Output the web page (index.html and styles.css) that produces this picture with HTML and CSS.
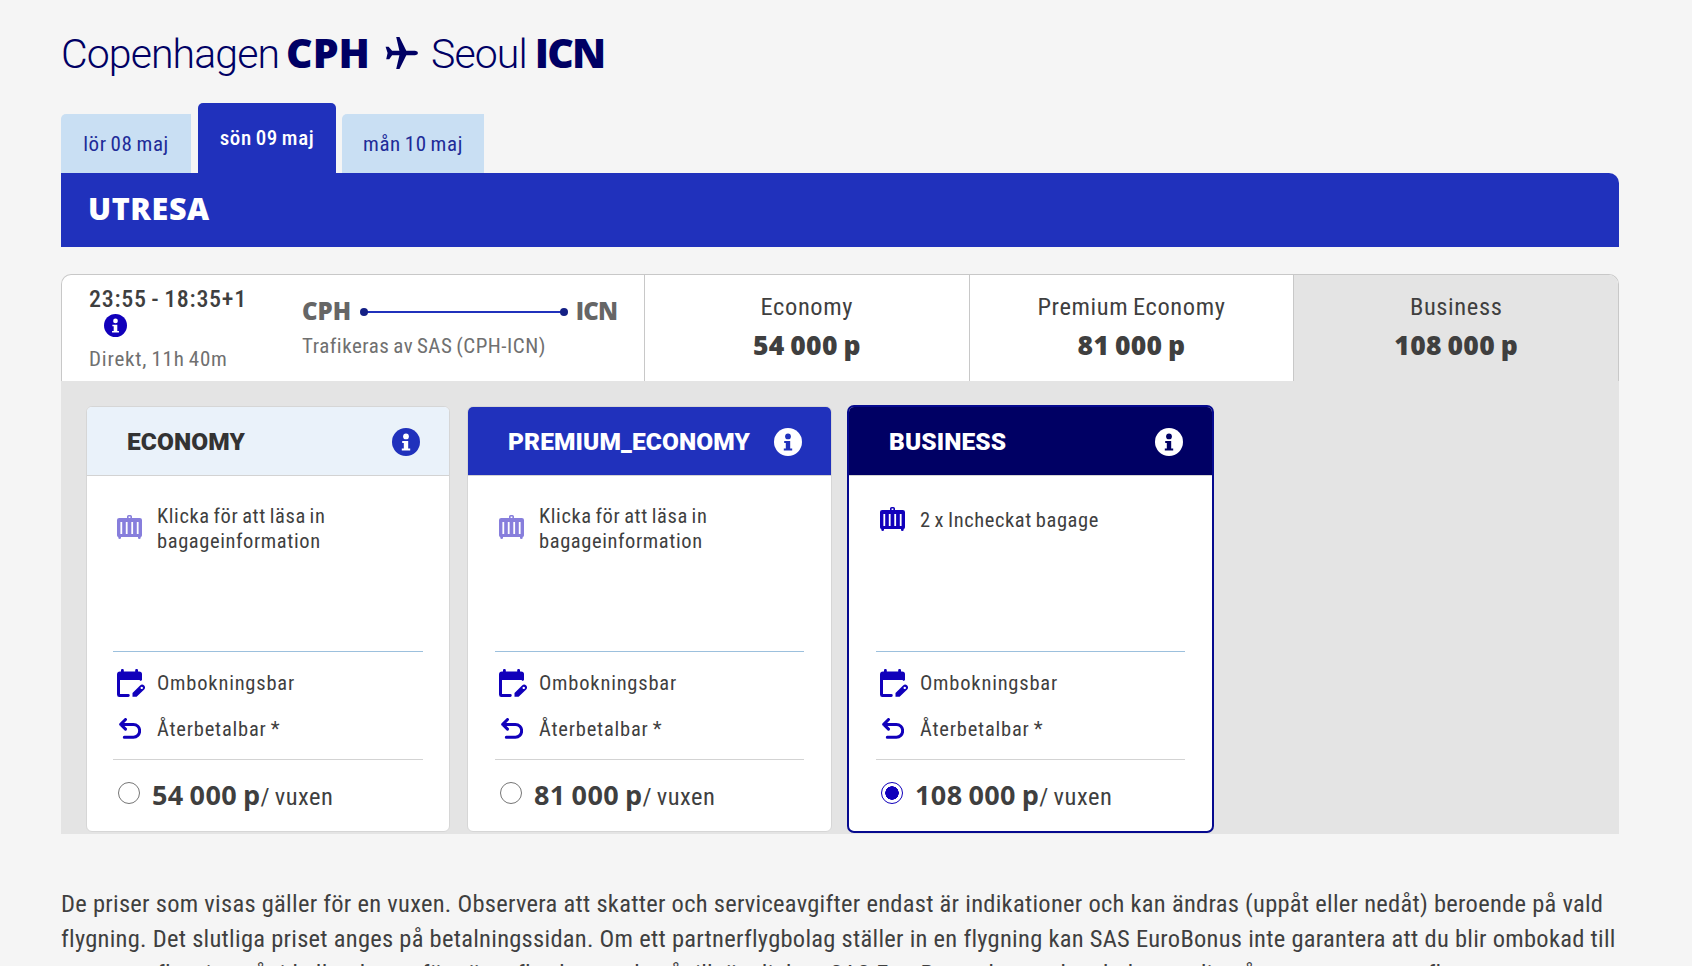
FILE: index.html
```
<!DOCTYPE html>
<html lang="sv">
<head>
    <meta charset="UTF-8">
    <meta name="viewport" content="width=device-width, initial-scale=1.0">
    <title>Välj flyg</title>
    <link rel="stylesheet" href="styles.css">
</head>
<body>
    <!-- Ikoner -->
    <svg class="sprite">
        <symbol id="info" viewBox="0 0 28 28">
            <circle cx="14" cy="14" r="14" fill="currentColor"/>
            <circle class="info-mark" cx="14" cy="8.4" r="2.9"/>
            <path class="info-mark" d="M10.2 13h6v7.6h2v1.9H9.8v-1.9h2v-5.7h-1.6z"/>
        </symbol>
        <symbol id="bag" viewBox="0 0 25 24">
            <path fill="currentColor" fill-rule="evenodd" d="M10 3V1.6Q10 0 11.6 0h1.8Q15 0 15 1.6V3h7.8Q25 3 25 5v15.3q0 1.7-1.3 1.7v.8Q23.7 24 22.3 24T21 22.8V22H4v.8Q4 24 2.7 24T1.3 22.8V22Q0 22 0 20.3V5q0-2 2.2-2zm1.6 0h1.8V1.6h-1.8zM3.4 7v12h1.8V7zm5.4 0v12h1.8V7zm5.5 0v12h1.8V7zm5.5 0v12h1.8V7z"/>
        </symbol>
        <symbol id="calendar" viewBox="0 0 28 28">
            <path fill="currentColor" d="M4 2.4V1.3a1.4 1.4 0 0 1 2.8 0v1.1h11.4V1.3a1.4 1.4 0 0 1 2.8 0v1.1h1Q25 2.4 25 5.2V11l-1.2.9-1.4-.9H3v14h8.3a1.4 1.4 0 0 1 0 2.9H2.5Q0 28 0 25.4V5.4Q0 2.4 3 2.4z"/>
            <path fill="currentColor" fill-rule="evenodd" d="M15.5 27.8v-3.7l7.6-7.7q2-2 4.1 0 1.7 2 0 4l-7.6 7.4h-4.1zM24.7 17.7a1.2 1.2 0 1 0 .1 0z"/>
        </symbol>
        <symbol id="undo" viewBox="0 0 22 21">
            <path fill="none" stroke="currentColor" stroke-width="3" stroke-linecap="round" stroke-linejoin="round" d="M6.5 1.5L1.7 6.4l4.8 4.7M2 6.4h12.4a6.2 6.4 0 0 1 0 12.9H5.3"/>
        </symbol>
    </svg>

    <h1 class="route-title">
        <span class="city">Copenhagen</span>
        <span class="code">CPH</span>
        <svg class="plane" viewBox="0 0 33 32"><path fill="currentColor" d="M11.2 0h3.3l6.8 13.7h8.7q3 .6 3 2.3t-3 2.3h-8.7L14.5 32h-3.3l3.2-13.7H7.1L4.3 22.2H1.2L2.6 16 .6 9.7h3l3.5 4h7.3z"/></svg>
        <span class="city">Seoul</span>
        <span class="code code-to">ICN</span>
    </h1>

    <div class="date-tabs">
        <div class="tab tab-prev">lör 08 maj</div>
        <div class="tab active">sön 09 maj</div>
        <div class="tab tab-next">mån 10 maj</div>
    </div>
    <h2 class="direction">UTRESA</h2>

    <!-- Flygrad -->
    <div class="flight">
        <div class="flight-info">
            <div class="times">
                <div class="hours">23:55 - 18:35+1</div>
                <svg class="info-small"><use href="#info"/></svg>
                <div class="duration">Direkt, 11h 40m</div>
            </div>
            <div class="segment">
                <div class="stops">
                    <span>CPH</span>
                    <div class="line"></div>
                    <span class="arrival">ICN</span>
                </div>
                <div class="operator">Trafikeras av SAS (CPH-ICN)</div>
            </div>
        </div>
        <div class="cabin">
            <div class="cabin-name">Economy</div>
            <div class="cabin-price">54 000 p</div>
        </div>
        <div class="cabin">
            <div class="cabin-name">Premium Economy</div>
            <div class="cabin-price">81 000 p</div>
        </div>
        <div class="cabin selected">
            <div class="cabin-name">Business</div>
            <div class="cabin-price">108 000 p</div>
        </div>
    </div>

    <!-- Biljettklasser -->
    <div class="fares">
        <div class="card economy">
            <div class="card-head">
                <h3>ECONOMY</h3>
                <svg class="info"><use href="#info"/></svg>
            </div>
            <div class="card-body">
                <div class="baggage">
                    <div class="row unloaded">
                        <span class="icon"><svg class="bag"><use href="#bag"/></svg></span>
                        <span class="text">Klicka för att läsa in<br>bagageinformation</span>
                    </div>
                </div>
                <div class="rules">
                    <div class="row">
                        <span class="icon"><svg class="calendar"><use href="#calendar"/></svg></span>
                        <span class="text">Ombokningsbar</span>
                    </div>
                    <div class="row">
                        <span class="icon"><svg class="undo"><use href="#undo"/></svg></span>
                        <span class="text">Återbetalbar *</span>
                    </div>
                </div>
                <label class="price">
                    <span class="radio"></span>
                    <span><b>54 000 p</b><span class="per">/ vuxen</span></span>
                </label>
            </div>
        </div>

        <div class="card premium">
            <div class="card-head">
                <h3>PREMIUM_ECONOMY</h3>
                <svg class="info"><use href="#info"/></svg>
            </div>
            <div class="card-body">
                <div class="baggage">
                    <div class="row unloaded">
                        <span class="icon"><svg class="bag"><use href="#bag"/></svg></span>
                        <span class="text">Klicka för att läsa in<br>bagageinformation</span>
                    </div>
                </div>
                <div class="rules">
                    <div class="row">
                        <span class="icon"><svg class="calendar"><use href="#calendar"/></svg></span>
                        <span class="text">Ombokningsbar</span>
                    </div>
                    <div class="row">
                        <span class="icon"><svg class="undo"><use href="#undo"/></svg></span>
                        <span class="text">Återbetalbar *</span>
                    </div>
                </div>
                <label class="price">
                    <span class="radio"></span>
                    <span><b>81 000 p</b><span class="per">/ vuxen</span></span>
                </label>
            </div>
        </div>

        <div class="card business">
            <div class="card-head">
                <h3>BUSINESS</h3>
                <svg class="info"><use href="#info"/></svg>
            </div>
            <div class="card-body">
                <div class="baggage">
                    <div class="row">
                        <span class="icon"><svg class="bag"><use href="#bag"/></svg></span>
                        <span class="text">2 x Incheckat bagage</span>
                    </div>
                </div>
                <div class="rules">
                    <div class="row">
                        <span class="icon"><svg class="calendar"><use href="#calendar"/></svg></span>
                        <span class="text">Ombokningsbar</span>
                    </div>
                    <div class="row">
                        <span class="icon"><svg class="undo"><use href="#undo"/></svg></span>
                        <span class="text">Återbetalbar *</span>
                    </div>
                </div>
                <label class="price">
                    <span class="radio checked"></span>
                    <span><b>108 000 p</b><span class="per">/ vuxen</span></span>
                </label>
            </div>
        </div>
    </div>

    <p class="notice">De priser som visas gäller för en vuxen. Observera att skatter och serviceavgifter endast är indikationer och kan ändras (uppåt eller nedåt) beroende på vald<br>
        flygning. Det slutliga priset anges på betalningssidan. Om ett partnerflygbolag ställer in en flygning kan SAS EuroBonus inte garantera att du blir ombokad till<br>
        en annan flygning på tid eller datum för nästa flyg beroende på tillgänglighet. SAS EuroBonus kan endast boka om dig på ett annat partnerflyg.</p>
</body>
</html>
```
FILE: styles.css
```
* {
    box-sizing: border-box;
}
html {
    height: 100%;
    overflow: hidden;
}
body {
    --mark: white;
    margin: 0;
    padding: 24px 73px 0 61px;
    height: 100%;
    overflow: hidden;
    background-color: #f5f5f5;
    color: #3f3f3f;
    font-family: Roboto, "Noto Sans", sans-serif;
    font-stretch: 75%;
    letter-spacing: 0.6px;
    word-spacing: -1.5px;
}
h1, h2, h3, p {
    margin: 0;
}
svg {
    display: block;
    flex-shrink: 0;
}
.sprite {
    display: none;
}
.info-mark {
    fill: var(--mark);
}

/* Rubrik */
.route-title {
    display: flex;
    height: 56px;
    line-height: 56px;
    font-size: 41px;
    color: #000064;
}
.city {
    padding-top: 2px;
    font-weight: 300;
    font-stretch: 100%;
    letter-spacing: -0.9px;
}
.code {
    margin-left: 7px;
    font-family: "Open Sans", sans-serif;
    font-weight: 800;
    font-stretch: 100%;
    letter-spacing: 0;
}
.code-to {
    margin-left: 8px;
    letter-spacing: -1.8px;
}
.plane {
    width: 33px;
    height: 32px;
    margin: 13px 13px 0 15px;
}

/* Datumflikar */
.date-tabs {
    display: flex;
    align-items: flex-end;
    height: 70px;
    margin-top: 23px;
}
.tab {
    height: 59px;
    line-height: 61px;
    text-align: center;
    font-size: 21px;
    color: #202b98;
    background-color: #c9dff3;
    border-radius: 5px 0 0 0;
}
.tab-prev {
    width: 130px;
}
.tab-next {
    width: 142px;
}
.tab.active {
    width: 138px;
    height: 70px;
    margin: 0 6px 0 7px;
    line-height: 70px;
    font-weight: 500;
    color: white;
    background-color: #2031bc;
    border-radius: 5px 5px 0 0;
}
.direction {
    height: 74px;
    padding-left: 27px;
    line-height: 70px;
    font-family: "Open Sans", sans-serif;
    font-size: 30.5px;
    font-weight: 800;
    font-stretch: 100%;
    color: white;
    background-color: #2031bc;
    border-radius: 0 10px 0 0;
}

/* Flygrad */
.flight {
    display: flex;
    height: 107px;
    margin-top: 27px;
    background-color: white;
    border: 1px solid #c8c8c8;
    border-bottom: none;
    border-radius: 10px 10px 0 0;
    overflow: hidden;
}
.flight-info {
    display: flex;
    width: 582px;
    padding: 8px 0 0 27px;
}
.times {
    width: 213px;
}
.hours {
    height: 30px;
    line-height: 32px;
    font-size: 24px;
    font-weight: 500;
    letter-spacing: 0.7px;
}
.info-small {
    width: 23px;
    height: 23px;
    margin: 1px 0 8px 15px;
    color: #1100bb;
}
.duration, .operator {
    line-height: 28px;
    font-size: 21px;
    color: #707070;
}
.duration {
    letter-spacing: 0.8px;
}
.segment {
    padding-top: 13px;
}
.stops {
    display: flex;
    align-items: center;
    width: 315px;
    line-height: 30px;
    font-family: "Open Sans", sans-serif;
    font-size: 24px;
    font-weight: 800;
    font-stretch: 100%;
    letter-spacing: 0;
    color: #666;
}
.arrival {
    letter-spacing: -0.9px;
}
.line {
    position: relative;
    flex: 1;
    height: 2px;
    margin: 2px 11px 0 12px;
    background-color: #2031bc;
}
.line::before, .line::after {
    content: "";
    position: absolute;
    top: -3px;
    left: -3px;
    width: 8px;
    height: 8px;
    border-radius: 50%;
    background-color: #142085;
}
.line::after {
    left: auto;
    right: -3px;
}
.operator {
    margin-top: 6px;
    letter-spacing: 0.5px;
}
.cabin {
    flex: 1;
    padding-top: 15px;
    text-align: center;
    border-left: 1px solid #c8c8c8;
}
.cabin.selected {
    background-color: #e4e4e4;
}
.cabin-name {
    line-height: 34px;
    font-size: 24.5px;
}
.cabin-price {
    margin-top: 2px;
    line-height: 38px;
    font-family: "Open Sans", sans-serif;
    font-size: 26.5px;
    font-weight: 800;
    font-stretch: 100%;
    letter-spacing: 0.3px;
}

/* Biljettklasser */
.fares {
    display: flex;
    align-items: flex-start;
    height: 453px;
    padding: 24px 25px 0;
    background-color: #e4e4e4;
}
.card {
    height: 426px;
    margin-top: 1px;
    background-color: white;
    border: 1px solid #d6d6d6;
    border-radius: 6px;
    overflow: hidden;
}
.card-head {
    display: flex;
    align-items: center;
    justify-content: space-between;
    height: 69px;
    padding: 0 29px 0 40px;
    border-bottom: 1px solid #d3d3d3;
}
.card h3 {
    line-height: 67px;
    font-size: 24.5px;
    font-weight: 900;
    font-stretch: 100%;
    letter-spacing: 0.1px;
}
.info {
    width: 28px;
    height: 28px;
    margin-top: 1px;
}
.economy {
    width: 364px;
}
.economy .card-head {
    color: #333;
    background-color: #eaf2fa;
}
.economy .info {
    color: #2031bc;
}
.premium {
    width: 365px;
    margin-left: 17px;
}
.premium .card-head {
    --mark: #2031bc;
    color: white;
    background-color: #2031bc;
}
.business {
    width: 367px;
    height: 428px;
    margin: 0 0 0 15px;
    border: 2px solid #060a8f;
    border-radius: 7px;
}
.business .card-head {
    --mark: #000064;
    color: white;
    background-color: #000064;
}
.card-body {
    padding: 0 26px;
    font-size: 20.5px;
    line-height: 25px;
}
.premium .card-body, .business .card-body {
    padding: 0 27px;
}
.row {
    display: flex;
    align-items: center;
}
.icon {
    width: 44px;
    padding-left: 4px;
    flex-shrink: 0;
    color: #1100bb;
}
.text {
    margin: 1px 0 -1px;
}
.baggage {
    height: 176px;
    padding-top: 26px;
    border-bottom: 1px solid #9cc0dd;
}
.baggage .row {
    min-height: 33px;
}
.baggage .text {
    margin: 2px 0 -2px;
}
.bag {
    width: 25px;
    height: 24px;
}
.unloaded .bag {
    opacity: 0.5;
}
.rules {
    height: 108px;
    padding-top: 7px;
    border-bottom: 1px solid #d3d3d3;
}
.rules .text {
    letter-spacing: 0.8px;
}
.rules .row {
    height: 46px;
}
.calendar {
    width: 28px;
    height: 28px;
    margin-top: 2px;
}
.undo {
    width: 22px;
    height: 21px;
    margin-left: 2px;
    margin-top: 1px;
}
.price {
    display: flex;
    align-items: center;
    height: 73px;
    padding-left: 5px;
}
.radio {
    width: 22px;
    height: 22px;
    margin: -7px 12px 0 0;
    border: 1px solid #767676;
    border-radius: 50%;
}
.radio.checked {
    border-color: #1100bb;
    background: radial-gradient(circle, #1100bb 6.5px, white 7px);
}
.price b {
    font-family: "Open Sans", sans-serif;
    font-size: 27px;
    font-weight: 700;
    font-stretch: 100%;
    letter-spacing: 0.4px;
}
.per {
    font-size: 24.5px;
    letter-spacing: 0.5px;
}

.notice {
    margin-top: 52px;
    line-height: 35px;
    font-size: 24.5px;
    letter-spacing: 0.27px;
    word-spacing: 0;
    white-space: nowrap;
}
```
